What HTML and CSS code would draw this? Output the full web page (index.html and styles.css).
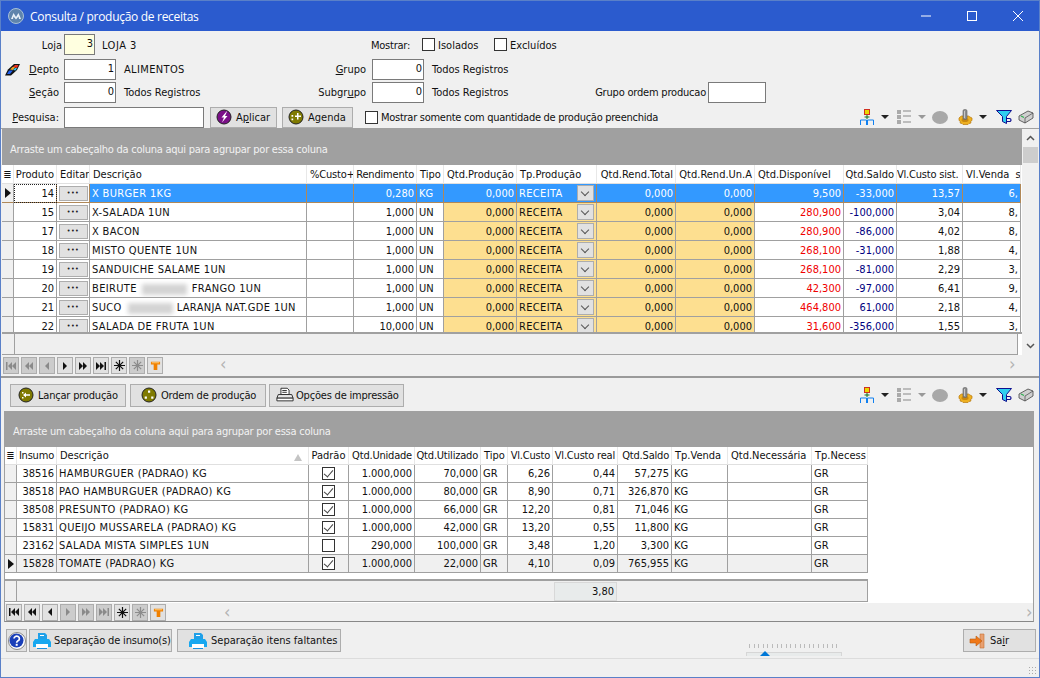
FILE: index.html
```html
<!DOCTYPE html>
<html>
<head>
  <title>Consulta / produção de receitas</title>
  <link rel="stylesheet" href="styles.css">
</head>
<body>
<svg class="defs" width="0" height="0">
  <symbol id="i-tree" viewBox="0 0 16 16">
    <rect x="5.500" y="0.500" width="5" height="5" fill="#e8d800" stroke="#d03020"/>
    <path d="M8 6v4M5.500 8h5" stroke="#107020" fill="none"/>
    <path d="M1.500 16v-5h6v5M8.500 16v-5h6v5" stroke="#1080f0" fill="none"/>
  </symbol>
  <symbol id="i-list" viewBox="0 0 16 16">
    <path d="M1 1h4v4h-4zM1 6h4v4h-4zM1 11h4v4h-4z" fill="#aaa"/>
    <path d="M7 2h8M7 7h8M7 13h8" stroke="#aaa" stroke-width="1.500"/>
  </symbol>
  <symbol id="i-gear" viewBox="0 0 16 16">
    <path d="M3 8l1.500-1h7l1.500 1 2 1v2.500l-1.500 1 .5 1.500-2 .5-1 1h-5l-1-1-2-.5 .5-1.500-1.500-1v-2.500z" fill="#eeb020" stroke="#b87810" stroke-width=".7"/>
    <ellipse cx="8" cy="11" rx="3.500" ry="2" fill="#c88810"/>
    <rect x="6" y="0.500" width="4" height="10" rx="1.500" fill="#8f8f8f" stroke="#5a5a5a" stroke-width=".6"/>
    <path d="M7.500 2v7" stroke="#c8c8c8"/>
  </symbol>
  <symbol id="i-funnel" viewBox="0 0 16 16">
    <path d="M0.500 1.500h15l-5 6v7l-4-2v-5z" fill="#30d0f0" stroke="#101090"/>
    <path d="M10.500 9.500h3a1.500 1.500 0 0 1 0 3h-3" fill="none" stroke="#101090" stroke-width="1.200"/>
  </symbol>
  <symbol id="i-box" viewBox="0 0 16 16">
    <path d="M1 7l9-5 5 2v5l-8 5-6-3z" fill="#cfcfcf" stroke="#444" stroke-width=".8"/>
    <path d="M3 7l3 1.500" stroke="#30b050" stroke-width="1.200"/>
    <path d="M7 9l8-5M7 9v5" stroke="#444" stroke-width=".7" fill="none"/>
  </symbol>
  <symbol id="i-olive-arrow" viewBox="0 0 16 16">
    <circle cx="8" cy="8" r="7" fill="#7f7a00" stroke="#222"/>
    <path d="M8 5.500l-3 2.500 3 2.500zM8 7.300h4v1.400h-4z" fill="#fff"/>
    <path d="M4 5h1.500v1.500h-1.500zM4 10h1.500v1.500h-1.500z" fill="#fff"/>
  </symbol>
  <symbol id="i-olive-plus" viewBox="0 0 16 16">
    <circle cx="8" cy="8" r="7" fill="#7f7a00" stroke="#222"/>
    <path d="M9 4h1.500v2.500h2.500v1.500h-2.500v2.500h-1.500v-2.500h-2v-1.500h2z" fill="#fff"/>
    <path d="M3.500 6h1.700v1.700h-1.700zM3.500 9.500h1.700v1.700h-1.700z" fill="#fff"/>
  </symbol>
  <symbol id="i-olive-dots" viewBox="0 0 16 16">
    <circle cx="8" cy="8" r="7" fill="#7f7a00" stroke="#222"/>
    <path d="M7 3.500h2.200v2.200h-2.200zM3.700 9.500h2.200v2.200h-2.200zM10.200 9.500h2.200v2.200h-2.200z" fill="#fff"/>
  </symbol>
  <symbol id="i-bolt" viewBox="0 0 16 16">
    <circle cx="8" cy="8" r="7" fill="#7a1088" stroke="#222"/>
    <path d="M10.500 2.500l-5 6h2.500l-2 5 5.500-6.500h-2.500l2-4.500z" fill="#fff"/>
  </symbol>
  <symbol id="i-printer" viewBox="0 0 20 16">
    <path d="M5.500 0.500h7l2 2v5h-9z" fill="#fff" stroke="#222"/>
    <path d="M7 3h5M7 5h5" stroke="#222"/>
    <path d="M2.500 7.500h15l1.500 4h-18z" fill="#e8e8e8" stroke="#222"/>
    <path d="M1 11.500h18v3h-18z" fill="#fff" stroke="#222"/>
  </symbol>
  <symbol id="i-printer-blue" viewBox="0 0 18 16">
    <path d="M5 0h7l2 2v5h-9z" fill="#20a0e8"/>
    <path d="M7 2.500h4" stroke="#fff"/>
    <path d="M2 6h14l2 3v5h-18v-5z" fill="#18a8f0"/>
    <path d="M3 11h12v4h-12z" fill="#fff"/>
    <path d="M4 15h10v1h-10z" fill="#1890e0"/>
  </symbol>
  <symbol id="i-first" viewBox="0 0 10 8"><path d="M0 0h1.500v8h-1.500zM6 0v8l-4-4zM10 0v8l-4-4z"/></symbol>
  <symbol id="i-prev2" viewBox="0 0 10 8"><path d="M5 0v8l-4-4zM9 0v8l-4-4z"/></symbol>
  <symbol id="i-prev" viewBox="0 0 10 8"><path d="M7 0v8l-4-4z"/></symbol>
  <symbol id="i-next" viewBox="0 0 10 8"><path d="M3 0v8l4-4z"/></symbol>
  <symbol id="i-next2" viewBox="0 0 10 8"><path d="M1 0v8l4-4zM5 0v8l4-4z"/></symbol>
  <symbol id="i-last" viewBox="0 0 10 8"><path d="M0 0v8l4-4zM4 0v8l4-4zM8.500 0h1.500v8h-1.500z"/></symbol>
  <symbol id="i-star" viewBox="0 0 12 12"><path d="M6 0v12M0 6h12M2 2l8 8M10 2l-8 8" stroke="currentColor" stroke-width="1.300"/></symbol>
  <symbol id="i-filter" viewBox="0 0 12 12"><path d="M1 2h10v3h-3v6h-4v-6h-3z" fill="#f08000"/><path d="M2 3h8" stroke="#ffd080"/></symbol>
</svg>

<div class="window">
  <div class="titlebar">
    <svg class="app-icon" width="16" height="16" viewBox="0 0 16 16">
      <circle cx="8" cy="8" r="7.500" fill="#5f84ac" stroke="#a8c0d8"/>
      <path d="M3 11l2.500-6 2.500 4 2.500-4 2.500 6h-2l-.5-2.500-2.500 3-2.500-3-.5 2.500z" fill="#e8f0f8"/>
    </svg>
    <span class="title-text">Consulta / produção de receitas</span>
    <div class="win-controls">
      <svg width="46" height="30" viewBox="0 0 46 30"><path d="M18 15h10" stroke="#fff"/></svg>
      <svg width="46" height="30" viewBox="0 0 46 30"><rect x="18.500" y="10.500" width="9" height="9" fill="none" stroke="#fff"/></svg>
      <svg width="46" height="30" viewBox="0 0 46 30"><path d="M18 10l10 10M28 10l-10 10" stroke="#fff"/></svg>
    </div>
  </div>

  <div class="filters">
    <div class="frow r1">
      <label class="lbl l-loja">Loja</label>
      <input class="field hl w31" value="3">
      <span class="desc d-loja">LOJA 3</span>
      <label class="lbl l-mostrar">Mostrar:</label>
      <span class="box b-isol"></span><span class="chk-text c-isol">Isolados</span>
      <span class="box"></span><span class="chk-text">Excluídos</span>
    </div>
    <div class="frow r2">
      <svg class="eraser" width="15" height="12" viewBox="0 0 15 12">
        <path d="M0 11.500l3-6 6-5.500h6l-3 6-6 5.500z" fill="#111"/>
        <path d="M8 3l2-2h3.500l-1.500 3z" fill="#e83020"/>
        <path d="M5 5.500l2.500-2.500h2.500l-2 3z" fill="#f0a020"/>
        <path d="M8 6l2-2h2l-1.500 2.500z" fill="#30c8f0"/>
        <path d="M2 10l2-3.500h4l-3 3.500z" fill="#2060f0"/>
      </svg>
      <label class="lbl l-depto"><u>D</u>epto</label>
      <input class="field w52" value="1">
      <span class="desc d-a caps">ALIMENTOS</span>
      <label class="lbl l-grupo"><u>G</u>rupo</label>
      <input class="field w52" value="0">
      <span class="desc d-b">Todos Registros</span>
    </div>
    <div class="frow r3">
      <label class="lbl l-main"><u>S</u>eção</label>
      <input class="field w52" value="0">
      <span class="desc d-a">Todos Registros</span>
      <label class="lbl l-grupo">Subgr<u>u</u>po</label>
      <input class="field w52" value="0">
      <span class="desc d-b">Todos Registros</span>
      <label class="lbl l-ordem tight">Grupo ordem producao</label>
      <input class="field w59" value="">
    </div>
    <div class="frow r4">
      <label class="lbl l-main"><u>P</u>esquisa:</label>
      <input class="field w140" value="">
      <button class="btn b-aplicar"><svg width="16" height="16"><use href="#i-bolt"/></svg><span>A<u>p</u>licar</span></button>
      <button class="btn b-agenda"><svg width="16" height="16"><use href="#i-olive-plus"/></svg><span>Agenda</span></button>
      <span class="box b-mostrar"></span><span class="chk-text c-long">Mostrar somente com quantidade de produção preenchida</span>
      <div class="tools">
        <svg width="16" height="16"><use href="#i-tree"/></svg><i class="caret"></i>
        <svg class="t-list" width="16" height="16"><use href="#i-list"/></svg><i class="caret off"></i>
        <i class="dot"></i>
        <svg width="16" height="16"><use href="#i-gear"/></svg><i class="caret"></i>
        <svg class="t-fun" width="16" height="16"><use href="#i-funnel"/></svg>
        <svg class="t-box" width="16" height="16"><use href="#i-box"/></svg>
      </div>
    </div>
  </div>

  <div class="pane-top">
    <div class="grid-area">
      <div class="band">Arraste um cabeçalho da coluna aqui para agrupar por essa coluna</div>
      <div class="grid-clip">
      <table class="grid top-grid">
        <colgroup>
          <col style="width:12px"><col style="width:43px"><col style="width:33px"><col style="width:217px"><col style="width:47px"><col style="width:63px"><col style="width:27px"><col style="width:73px"><col style="width:80px"><col style="width:79px"><col style="width:79px"><col style="width:89px"><col style="width:53px"><col style="width:66px"><col style="width:58px">
        </colgroup>
        <thead>
          <tr><th class="ind">≣</th><th class="r">Produto</th><th>Editar</th><th>Descrição</th><th class="tight">%Custo+</th><th class="r tight">Rendimento</th><th>Tipo</th><th>Qtd.Produção</th><th>Tp.Produção</th><th class="r">Qtd.Rend.Total</th><th class="r">Qtd.Rend.Un.A</th><th>Qtd.Disponível</th><th class="r">Qtd.Saldo</th><th class="r tight h-sist">Vl.Custo sist.</th><th>Vl.Venda&nbsp; s</th></tr>
        </thead>
        <tbody>
          <tr class="sel"><td class="ind"><i class="arrow"></i></td><td class="r cur">14</td><td class="c"><span class="dots">•••</span></td><td>X BURGER 1KG</td><td></td><td class="r">0,280</td><td>KG</td><td class="r">0,000</td><td class="combo">RECEITA<span class="drop"></span></td><td class="r">0,000</td><td class="r">0,000</td><td class="r">9,500</td><td class="r">-33,000</td><td class="r">13,57</td><td class="r">6,</td></tr>
          <tr><td class="ind"></td><td class="r">15</td><td class="c"><span class="dots">•••</span></td><td>X-SALADA 1UN</td><td></td><td class="r">1,000</td><td>UN</td><td class="r y">0,000</td><td class="combo y">RECEITA<span class="drop"></span></td><td class="r y">0,000</td><td class="r y">0,000</td><td class="r red">280,900</td><td class="r navy">-100,000</td><td class="r">3,04</td><td class="r">8,</td></tr>
          <tr><td class="ind"></td><td class="r">17</td><td class="c"><span class="dots">•••</span></td><td>X BACON</td><td></td><td class="r">1,000</td><td>UN</td><td class="r y">0,000</td><td class="combo y">RECEITA<span class="drop"></span></td><td class="r y">0,000</td><td class="r y">0,000</td><td class="r red">280,900</td><td class="r navy">-86,000</td><td class="r">4,02</td><td class="r">8,</td></tr>
          <tr><td class="ind"></td><td class="r">18</td><td class="c"><span class="dots">•••</span></td><td>MISTO QUENTE 1UN</td><td></td><td class="r">1,000</td><td>UN</td><td class="r y">0,000</td><td class="combo y">RECEITA<span class="drop"></span></td><td class="r y">0,000</td><td class="r y">0,000</td><td class="r red">268,100</td><td class="r navy">-31,000</td><td class="r">1,88</td><td class="r">4,</td></tr>
          <tr><td class="ind"></td><td class="r">19</td><td class="c"><span class="dots">•••</span></td><td>SANDUICHE SALAME 1UN</td><td></td><td class="r">1,000</td><td>UN</td><td class="r y">0,000</td><td class="combo y">RECEITA<span class="drop"></span></td><td class="r y">0,000</td><td class="r y">0,000</td><td class="r red">268,100</td><td class="r navy">-81,000</td><td class="r">2,29</td><td class="r">3,</td></tr>
          <tr><td class="ind"></td><td class="r">20</td><td class="c"><span class="dots">•••</span></td><td>BEIRUTE<span class="blur b1"></span>FRANGO 1UN</td><td></td><td class="r">1,000</td><td>UN</td><td class="r y">0,000</td><td class="combo y">RECEITA<span class="drop"></span></td><td class="r y">0,000</td><td class="r y">0,000</td><td class="r red">42,300</td><td class="r navy">-97,000</td><td class="r">6,41</td><td class="r">9,</td></tr>
          <tr><td class="ind"></td><td class="r">21</td><td class="c"><span class="dots">•••</span></td><td>SUCO<span class="blur b2"></span>LARANJA NAT.GDE 1UN</td><td></td><td class="r">1,000</td><td>UN</td><td class="r y">0,000</td><td class="combo y">RECEITA<span class="drop"></span></td><td class="r y">0,000</td><td class="r y">0,000</td><td class="r red">464,800</td><td class="r navy">61,000</td><td class="r">2,18</td><td class="r">4,</td></tr>
          <tr><td class="ind"></td><td class="r">22</td><td class="c"><span class="dots">•••</span></td><td>SALADA DE FRUTA 1UN</td><td></td><td class="r">10,000</td><td>UN</td><td class="r y">0,000</td><td class="combo y">RECEITA<span class="drop"></span></td><td class="r y">0,000</td><td class="r y">0,000</td><td class="r red">31,600</td><td class="r navy">-356,000</td><td class="r">1,55</td><td class="r">3,</td></tr>
        </tbody>
      </table>
      </div>
      <div class="foot top-foot"><span class="foot-ind"></span></div>
    </div>
    <div class="vscroll">
      <svg width="17" height="17" viewBox="0 0 17 17"><path d="M5 10l3.500-3.500 3.500 3.500" fill="none" stroke="#555" stroke-width="1.500"/></svg>
      <span class="thumb"></span>
      <svg class="vdown" width="17" height="17" viewBox="0 0 17 17"><path d="M5 7l3.500 3.500 3.500-3.500" fill="none" stroke="#555" stroke-width="1.500"/></svg>
    </div>
    <div class="navbar nav-top">
      <span class="nb off"><svg><use href="#i-first"/></svg></span>
      <span class="nb off"><svg><use href="#i-prev2"/></svg></span>
      <span class="nb off"><svg><use href="#i-prev"/></svg></span>
      <span class="nb"><svg><use href="#i-next"/></svg></span>
      <span class="nb"><svg><use href="#i-next2"/></svg></span>
      <span class="nb"><svg><use href="#i-last"/></svg></span>
      <span class="nb"><svg class="sm"><use href="#i-star"/></svg></span>
      <span class="nb off"><svg class="sm"><use href="#i-star"/></svg></span>
      <span class="nb"><svg class="sm"><use href="#i-filter"/></svg></span>
      <span class="harrow al1">‹</span>
      <span class="harrow ar1">›</span>
    </div>
  </div>

  <div class="pane-bottom">
    <div class="actions">
      <button class="btn b-lancar"><svg width="16" height="16"><use href="#i-olive-arrow"/></svg><span>Lançar produção</span></button>
      <button class="btn b-ordem"><svg width="16" height="16"><use href="#i-olive-dots"/></svg><span>Ordem de produção</span></button>
      <button class="btn b-opcoes"><svg width="18" height="16"><use href="#i-printer"/></svg><span>Opções de impressão</span></button>
      <div class="tools">
        <svg width="16" height="16"><use href="#i-tree"/></svg><i class="caret"></i>
        <svg class="t-list" width="16" height="16"><use href="#i-list"/></svg><i class="caret off"></i>
        <i class="dot"></i>
        <svg width="16" height="16"><use href="#i-gear"/></svg><i class="caret"></i>
        <svg class="t-fun" width="16" height="16"><use href="#i-funnel"/></svg>
        <svg class="t-box" width="16" height="16"><use href="#i-box"/></svg>
      </div>
    </div>
    <div class="sub-panel">
      <div class="band band-low">Arraste um cabeçalho da coluna aqui para agrupar por essa coluna</div>
      <div class="low-body">
        <table class="grid low-grid">
          <colgroup>
            <col style="width:12px"><col style="width:40px"><col style="width:252px"><col style="width:40px"><col style="width:66px"><col style="width:66px"><col style="width:27px"><col style="width:45px"><col style="width:65px"><col style="width:54px"><col style="width:56px"><col style="width:84px"><col style="width:56px">
          </colgroup>
          <thead>
            <tr><th class="ind">≣</th><th class="r tight">Insumo</th><th>Descrição<i class="sort"></i></th><th class="c">Padrão</th><th class="r tight">Qtd.Unidade</th><th class="r tight">Qtd.Utilizado</th><th>Tipo</th><th class="r tight">Vl.Custo</th><th class="r tight">Vl.Custo real</th><th class="r tight">Qtd.Saldo</th><th>Tp.Venda</th><th>Qtd.Necessária</th><th>Tp.Necess</th></tr>
          </thead>
          <tbody>
            <tr><td class="ind"></td><td class="r">38516</td><td>HAMBURGUER (PADRAO) KG</td><td class="c"><span class="tick on"></span></td><td class="r">1.000,000</td><td class="r">70,000</td><td>GR</td><td class="r">6,26</td><td class="r">0,44</td><td class="r">57,275</td><td>KG</td><td></td><td>GR</td></tr>
            <tr><td class="ind"></td><td class="r">38518</td><td>PAO HAMBURGUER (PADRAO) KG</td><td class="c"><span class="tick on"></span></td><td class="r">1.000,000</td><td class="r">80,000</td><td>GR</td><td class="r">8,90</td><td class="r">0,71</td><td class="r">326,870</td><td>KG</td><td></td><td>GR</td></tr>
            <tr><td class="ind"></td><td class="r">38508</td><td>PRESUNTO (PADRAO) KG</td><td class="c"><span class="tick on"></span></td><td class="r">1.000,000</td><td class="r">66,000</td><td>GR</td><td class="r">12,20</td><td class="r">0,81</td><td class="r">71,046</td><td>KG</td><td></td><td>GR</td></tr>
            <tr><td class="ind"></td><td class="r">15831</td><td>QUEIJO MUSSARELA (PADRAO) KG</td><td class="c"><span class="tick on"></span></td><td class="r">1.000,000</td><td class="r">42,000</td><td>GR</td><td class="r">13,20</td><td class="r">0,55</td><td class="r">11,800</td><td>KG</td><td></td><td>GR</td></tr>
            <tr><td class="ind"></td><td class="r">23162</td><td>SALADA MISTA SIMPLES 1UN</td><td class="c"><span class="tick"></span></td><td class="r">290,000</td><td class="r">100,000</td><td>GR</td><td class="r">3,48</td><td class="r">1,20</td><td class="r">3,300</td><td>KG</td><td></td><td>GR</td></tr>
            <tr class="cur-row"><td class="ind"><i class="arrow"></i></td><td class="r">15828</td><td>TOMATE (PADRAO) KG</td><td class="c"><span class="tick on"></span></td><td class="r">1.000,000</td><td class="r">22,000</td><td>GR</td><td class="r">4,10</td><td class="r">0,09</td><td class="r">765,955</td><td>KG</td><td></td><td>GR</td></tr>
          </tbody>
        </table>
        <div class="foot low-foot"><span class="foot-ind"></span><span class="sum">3,80</span></div>
      </div>
      <div class="navbar nav-low">
        <span class="nb"><svg><use href="#i-first"/></svg></span>
        <span class="nb"><svg><use href="#i-prev2"/></svg></span>
        <span class="nb"><svg><use href="#i-prev"/></svg></span>
        <span class="nb off"><svg><use href="#i-next"/></svg></span>
        <span class="nb off"><svg><use href="#i-next2"/></svg></span>
        <span class="nb off"><svg><use href="#i-last"/></svg></span>
        <span class="nb"><svg class="sm"><use href="#i-star"/></svg></span>
        <span class="nb off"><svg class="sm"><use href="#i-star"/></svg></span>
        <span class="nb"><svg class="sm"><use href="#i-filter"/></svg></span>
        <span class="harrow al2">‹</span>
        <span class="harrow ar2">›</span>
      </div>
    </div>
    <div class="footer-row">
      <button class="btn b-help">
        <svg width="18" height="18" viewBox="0 0 18 18"><circle cx="9" cy="9" r="8.500" fill="#fff" stroke="#888"/><circle cx="8.500" cy="8.500" r="7" fill="#1a3fb8"/><path d="M6 6.500a2.700 2.500 0 1 1 4 2.300c-1 .6-1.300 1-1.300 2" fill="none" stroke="#fff" stroke-width="1.700"/><rect x="7.700" y="11.800" width="2" height="2" fill="#fff"/></svg>
      </button>
      <button class="btn b-sep1"><svg width="18" height="16"><use href="#i-printer-blue"/></svg><span>Separação de insumo(s)</span></button>
      <button class="btn b-sep2"><svg width="18" height="16"><use href="#i-printer-blue"/></svg><span>Separação itens faltantes</span></button>
      <div class="slider">
        <div class="ticks"></div>
        <div class="track"><i class="knob"></i></div>
      </div>
      <button class="btn b-sair">
        <svg width="16" height="16" viewBox="0 0 16 16"><path d="M11 1h4v14h-4z" fill="#e8a070" stroke="#c87030" stroke-width=".6"/><path d="M1 6h6v-3l6 5-6 5v-3h-6z" fill="#f07818" stroke="#b85a10" stroke-width=".6"/></svg><span>Sa<u>i</u>r</span>
      </button>
    </div>
  </div>

  <div class="statusbar"><i class="grip"></i></div>
</div>
</body>
</html>
```

FILE: styles.css
```css
:root {
  --face: #f0f0f0;
  --line: #a0a0a0;
  --title: #2b5bce;
  --band: #a0a0a0;
  --amber: #fddf90;
  --select: #3399ff;
}

* {
  box-sizing: border-box;
}

html, body {
  margin: 0;
  height: 100%;
  overflow: hidden;
}

body {
  font-family: "DejaVu Sans Condensed", "DejaVu Sans", sans-serif;
  font-stretch: condensed;
  font-size: 11px;
  color: #111;
  background: var(--face);
}

.defs {
  display: none;
}

svg {
  flex: none;
}

.window {
  width: 1040px;
  height: 678px;
  display: flex;
  flex-direction: column;
  border: 1px solid #5a80c8;
  background: var(--face);
}

/* title bar */
.titlebar {
  height: 30px;
  flex: none;
  display: flex;
  align-items: center;
  background: var(--title);
  color: #fff;
  padding-left: 7px;
}

.app-icon {
  margin-right: 6px;
}

.title-text {
  font-size: 12px;
  font-family: "Open Sans", sans-serif;
  font-stretch: normal;
  letter-spacing: -0.3px;
}

.win-controls {
  margin-left: auto;
  display: flex;
  margin-right: -2px;
}

/* filter form */
.filters {
  height: 98px;
  flex: none;
  padding-top: 3px;
  border-bottom: 1px solid var(--line);
}

.frow {
  display: flex;
  align-items: center;
  height: 21px;
  white-space: nowrap;
}

.r1 .lbl, .r1 .chk-text, .r1 .desc { padding-top: 2px; }
.r2 { margin-top: 4px; }
.r3 { margin-top: 2px; }
.r4 { margin-top: 3px; height: 22px; }

.lbl {
  text-align: right;
  flex: none;
}

.tight { letter-spacing: -0.2px; }
.caps { letter-spacing: 0.35px; }

.l-loja { width: 63px; padding-right: 2px; }
.l-main { width: 63px; padding-right: 5px; }
.l-depto { width: 44px; padding-right: 5px; }
.eraser { margin-left: 4px; }

.field {
  flex: none;
  height: 21px;
  border: 1px solid #7a7a7a;
  background: #fff;
  text-align: right;
  font: inherit;
  padding: 0 1px 2px 0;
  color: #111;
  outline: none;
}

.field.hl { background: #ffffe0; }
.w31 { width: 31px; }
.w52 { width: 52px; }
.w59 { width: 58px; }
.w140 { width: 140px; }

.desc { flex: none; }
.d-loja { margin-left: 7px; width: 40px; letter-spacing: 0.5px; }
.d-a { margin-left: 8px; width: 190px; }
.d-b { margin-left: 8px; width: 160px; }
.l-mostrar { width: 269px; padding-right: 1px; letter-spacing: -0.25px; }
.l-grupo { width: 58px; padding-right: 6px; }
.l-ordem { width: 116px; padding-right: 2px; }

.box {
  flex: none;
  width: 13px;
  height: 13px;
  border: 1px solid #333;
  background: #fff;
}

.b-isol { margin-left: 11px; }
.b-mostrar { margin-left: 3px; margin-left: 12px; }
.chk-text { margin-left: 3px; flex: none; }
.c-isol { width: 56px; }
.c-long { letter-spacing: -0.27px; }

.btn {
  flex: none;
  display: inline-flex;
  align-items: center;
  gap: 4px;
  height: 21px;
  padding: 0 5px;
  font: inherit;
  white-space: nowrap;
  color: #111;
  background: #e1e1e1;
  border: 1px solid #adadad;
}

.b-aplicar { width: 67px; margin-left: 6px; }
.b-agenda { width: 71px; margin-left: 5px; }

.tools {
  margin-left: auto;
  display: flex;
  align-items: center;
  padding-right: 5px;
}

.caret {
  width: 0;
  height: 0;
  margin: 0 7px 0 6px;
  border-left: 4px solid transparent;
  border-right: 4px solid transparent;
  border-top: 4px solid #222;
}

.caret.off { border-top-color: #999; margin-right: 6px; }
.t-fun { margin-left: 2px; }
.t-box { margin-left: 6px; }

.dot {
  width: 16px;
  height: 13px;
  border-radius: 50%;
  background: #a8a8a8;
  margin-right: 9px;
}

/* grids */
.pane-top {
  flex: none;
  height: 249px;
  display: grid;
  grid-template-columns: 1020px 1fr;
  grid-template-rows: 226px 21px;
  padding-left: 1px;
  border-bottom: 2px solid #9a9a9a;
}

.grid-area {
  background: #fff;
  display: flex;
  flex-direction: column;
  overflow: hidden;
  height: 226px;
}

.band {
  flex: none;
  height: 36px;
  background: var(--band);
  color: #f2f2f2;
  padding: 15px 0 0 8px;
  line-height: 12px;
  letter-spacing: -0.25px;
}

.grid-clip {
  flex: none;
  height: 169px;
  overflow: hidden;
  border-bottom: 2px solid var(--line);
}

.grid {
  border-collapse: separate;
  border-spacing: 0;
  table-layout: fixed;
  background: #fff;
  flex: none;
}

.top-grid { width: 1019px; }
.low-grid { width: 863px; }

.grid th {
  height: 19px;
  font-weight: normal;
  text-align: left;
  padding: 0 0 0 3px;
  border-right: 1px solid #e8e8e8;
  border-bottom: 1px solid #e0e0e0;
  white-space: nowrap;
  overflow: hidden;
}

.grid td {
  height: 19px;
  padding: 0 2px 0 2px;
  border-right: 1px solid var(--line);
  border-bottom: 1px solid var(--line);
  white-space: nowrap;
  overflow: hidden;
  line-height: 14px;
}

.top-grid td:not(.c):not(.ind) { padding-top: 2px; }

.top-grid td:nth-child(4),
.top-grid td:nth-child(9),
.low-grid td:nth-child(3) {
  letter-spacing: 0.35px;
}

.low-grid td, .low-grid th { height: 18px; }

.grid th.r, .grid td.r { text-align: right; padding-right: 2px; padding-left: 0; }
.grid td.c, .grid th.c { text-align: center; padding: 0; }
.grid th.h-sist { padding-right: 4px; }

.grid .ind {
  background: var(--face);
  padding: 0;
  text-align: center;
  border-right-color: var(--line);
}

.grid th.ind { background: #fff; border-right-color: #e8e8e8; }

.arrow {
  display: inline-block;
  width: 0;
  height: 0;
  border-left: 6px solid #111;
  border-top: 5px solid transparent;
  border-bottom: 5px solid transparent;
  vertical-align: middle;
}

.sel td {
  background: var(--select);
  color: #fff;
  border-bottom-color: #b08858;
  border-right-color: #b08858;
}

.sel td.ind { background: var(--face); }
.sel td.cur { background: #fff; color: #111; outline: 1px dotted #222; outline-offset: -1px; }
.sel td.c { background: #fff; }
.cur-row td { background: var(--face); }

.y { background: var(--amber); }
.red { color: #f00000; }
.navy { color: #000080; }

.dots {
  display: block;
  width: 29px;
  height: 15px;
  margin: 0 auto;
  background: #e1e1e1;
  border: 1px solid #adadad;
  font-size: 7px;
  line-height: 13px;
  letter-spacing: 0.5px;
  color: #222;
}

.grid td.combo { position: relative; }

.drop {
  position: absolute;
  right: 2px;
  top: 1px;
  width: 17px;
  height: 16px;
  background: #e1e1e1;
  border: 1px solid #adadad;
}

.drop::after {
  content: '';
  position: absolute;
  left: 4px;
  top: 3px;
  width: 5px;
  height: 5px;
  border-right: 1px solid #555;
  border-bottom: 1px solid #555;
  transform: rotate(45deg);
}

.blur {
  display: inline-block;
  height: 11px;
  background: #d4d4d4;
  filter: blur(2px);
  vertical-align: middle;
}

.b1 { width: 45px; margin: 0 5px; }
.b2 { width: 45px; margin: 0 4px 0 6px; }

.foot {
  background: #efefef;
  display: flex;
  border-bottom: 1px solid var(--line);
}

.top-foot {
  flex: 1;
  margin-right: 4px;
  border-right: 1px solid var(--line);
}

.foot-ind {
  width: 13px;
  border-right: 1px solid var(--line);
}

.vscroll {
  grid-row: 1;
  grid-column: 2;
  background: #f0f0f0;
  display: flex;
  flex-direction: column;
  height: 226px;
  padding-top: 1px;
}

.thumb {
  width: 15px;
  height: 16px;
  margin-left: 1px;
  background: #cdcdcd;
}

.vdown { margin-top: auto; margin-bottom: 1px; }

.navbar {
  display: flex;
  align-items: center;
  gap: 2px;
  position: relative;
  padding-left: 1px;
  background: var(--face);
}

.nav-top { height: 21px; grid-row: 2; grid-column: 1 / span 2; }

.nb {
  width: 16px;
  height: 17px;
  border: 1px solid #adadad;
  background: #e1e1e1;
  display: flex;
  align-items: center;
  justify-content: center;
  color: #111;
  fill: #111;
}

.nb svg { width: 10px; height: 8px; }
.nb svg.sm { width: 11px; height: 11px; }

.nb.off {
  background: #cccccc;
  color: #8c8c8c;
  fill: #8a8a8a;
}

.harrow {
  position: absolute;
  top: 0;
  font-size: 18px;
  line-height: 17px;
  color: #b4b4b4;
}

.al1 { left: 218px; }
.ar1 { left: 1007px; }
.al2 { left: 219px; }
.ar2 { left: 1021px; }

/* lower pane */
.pane-bottom {
  flex: none;
  height: 280px;
  display: flex;
  flex-direction: column;
  padding-left: 3px;
}

.actions {
  flex: none;
  height: 33px;
  display: flex;
  align-items: center;
  padding-top: 1px;
}

.actions .btn { height: 23px; letter-spacing: -0.2px; }
.actions .b-lancar { width: 116px; margin-left: 6px; padding-left: 7px; }
.actions .b-ordem { width: 136px; margin-left: 4px; padding-left: 10px; }
.actions .b-opcoes { width: 135px; margin-left: 3px; padding-left: 6px; gap: 2px; }

.sub-panel {
  flex: none;
  width: 1030px;
  height: 211px;
  border-right: 1px solid var(--line);
  border-bottom: 1px solid #888;
  border-left: 1px solid var(--line);
  display: flex;
  flex-direction: column;
}

.band-low {
  height: 36px;
  padding-top: 15px;
}

.low-body {
  flex: none;
  height: 156px;
  background: #fff;
}

.low-foot {
  margin-top: 6px;
  width: 863px;
  height: 23px;
  border-right: 1px solid var(--line);
  border-top: 2px solid var(--line);
  position: relative;
}

.sum {
  position: absolute;
  left: 549px;
  top: 1px;
  width: 63px;
  height: 19px;
  background: #e8ebeb;
  border: 1px solid #d8d8d8;
  text-align: right;
  padding-right: 2px;
  line-height: 18px;
}

.low-foot .foot-ind { width: 12px; }

.sort {
  float: right;
  margin: 5px 6px 0 0;
  width: 0;
  height: 0;
  border-left: 4px solid transparent;
  border-right: 4px solid transparent;
  border-bottom: 7px solid #c4c4c4;
}

.tick {
  display: inline-block;
  width: 13px;
  height: 13px;
  border: 1px solid #333;
  background: #fff;
  vertical-align: middle;
  position: relative;
}

.tick.on::after {
  content: '';
  position: absolute;
  left: 3px;
  top: 0;
  width: 4px;
  height: 8px;
  border-right: 1px solid #444;
  border-bottom: 1px solid #444;
  transform: rotate(40deg);
}

.nav-low { height: 18px; }

.footer-row {
  flex: none;
  height: 36px;
  display: flex;
  align-items: flex-start;
  padding-top: 7px;
}

.footer-row .btn { height: 23px; }
.footer-row .b-help { width: 21px; margin-left: 2px; padding: 0; justify-content: center; }
.footer-row .b-sep1 { width: 143px; margin-left: 2px; padding: 0 3px; gap: 3px; letter-spacing: -0.15px; }
.footer-row .b-sep2 { width: 164px; margin-left: 5px; padding-left: 11px; }
.footer-row .b-sair { width: 73px; margin-left: 121px; gap: 5px; }

.slider {
  margin-left: 405px;
  width: 96px;
  flex: none;
  padding-top: 15px;
  height: 29px;
}

.ticks {
  height: 4px;
  margin: 0 3px;
  background: repeating-linear-gradient(90deg, #bbb 0 1px, transparent 1px 4.600px);
}

.track {
  margin-top: 4px;
  height: 4px;
  background: #e8ebeb;
  border: 1px solid #d6d6d6;
  border-bottom: 0;
  position: relative;
}

.knob {
  position: absolute;
  left: 13px;
  top: -2px;
  width: 0;
  height: 0;
  border-left: 5px solid transparent;
  border-right: 5px solid transparent;
  border-bottom: 5px solid #0078d7;
}

.statusbar {
  flex: 1;
  min-height: 0;
  border-top: 1px solid #dcdcdc;
  position: relative;
}

.grip {
  position: absolute;
  right: 2px;
  bottom: 2px;
  width: 9px;
  height: 9px;
  background: radial-gradient(circle, #aaa 1px, transparent 1px) 0 0 / 3px 3px;
}
```
